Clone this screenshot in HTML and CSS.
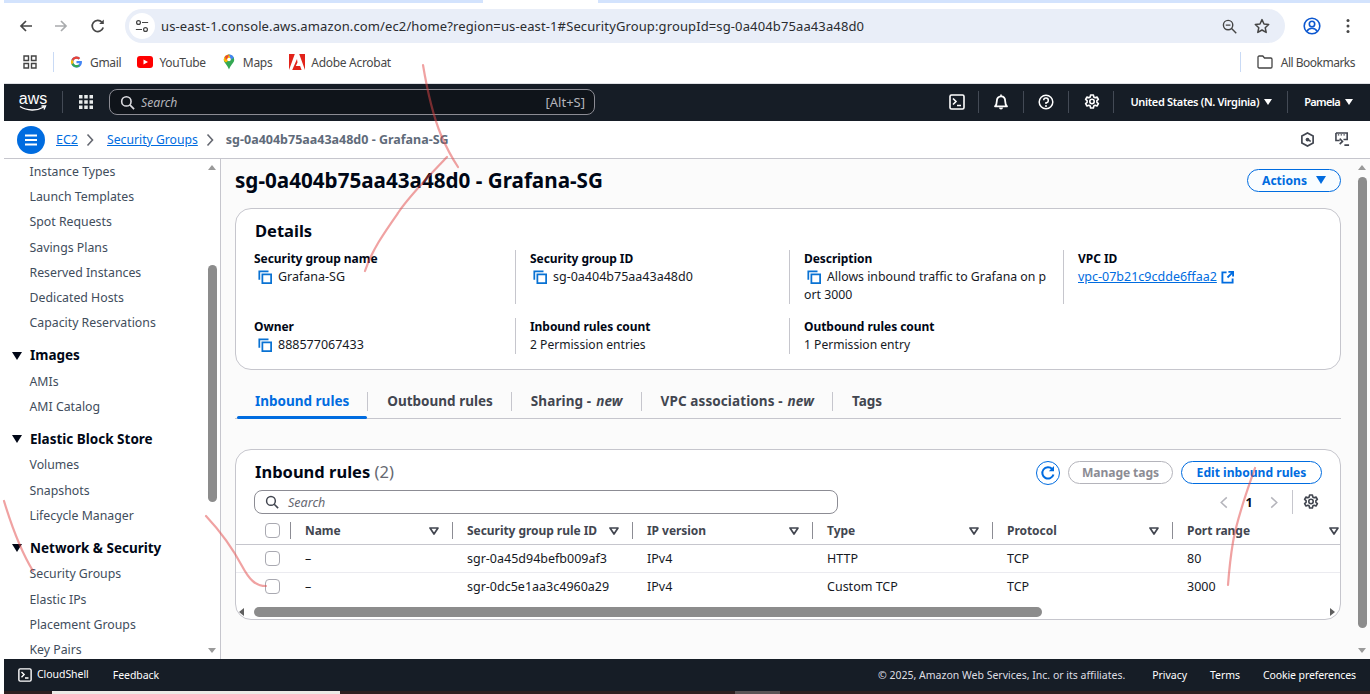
FILE: index.html
```html
<!DOCTYPE html>
<html lang="en">
<head>
<meta charset="utf-8">
<title>sg-0a404b75aa43a48d0 - Grafana-SG</title>
<link rel="stylesheet" href="styles.css">
</head>
<body>
<svg class="defs" width="0" height="0" aria-hidden="true">
  <symbol id="copy" viewBox="0 0 16 16"><path d="M1.500 11V1.500H12" fill="none" stroke="currentColor" stroke-width="2"/><rect x="5" y="5" width="10" height="10" fill="none" stroke="currentColor" stroke-width="2"/></symbol>
  <symbol id="filter" viewBox="0 0 10 8"><path d="M1 1h8L5 7z" fill="none" stroke="currentColor" stroke-width="1.700" stroke-linejoin="round"/></symbol>
  <symbol id="gear" viewBox="0 0 16 16"><path d="M6.600 1h2.800l.4 2 1.300.7 1.900-.7 1.400 2.400-1.500 1.300v1.600l1.500 1.300-1.400 2.400-1.900-.7-1.300.7-.4 2H6.600l-.4-2-1.300-.7-1.900.7L1.600 9.600l1.500-1.300V6.700L1.600 5.400 3 3l1.900.7 1.300-.7z" fill="none" stroke="currentColor" stroke-width="1.600" stroke-linejoin="round"/><circle cx="8" cy="7.500" r="2.200" fill="none" stroke="currentColor" stroke-width="1.600"/></symbol>
  <symbol id="shell" viewBox="0 0 16 16"><rect x="1" y="1" width="14" height="14" rx="1.500" fill="none" stroke="currentColor" stroke-width="1.600"/><path d="M4 4.500 7 7.500 4 10.500M8 11.500h4" fill="none" stroke="currentColor" stroke-width="1.600"/></symbol>
  <symbol id="search" viewBox="0 0 16 16"><circle cx="6.800" cy="6.800" r="5" fill="none" stroke="currentColor" stroke-width="1.700"/><path d="m10.500 10.500 4.500 4.500" stroke="currentColor" stroke-width="1.800"/></symbol>
</svg>

<div class="tabstrip"><span class="tabstrip-a"></span><span class="tabstrip-gap"></span><span class="tabstrip-b"></span></div>

<div class="toolbar">
  <svg class="tb-ic tb-back" viewBox="0 0 16 16"><path d="M14 8H3M8 3 3 8l5 5" fill="none" stroke="#474747" stroke-width="1.700"/></svg>
  <svg class="tb-ic tb-fwd" viewBox="0 0 16 16"><path d="M2 8h11M8 3l5 5-5 5" fill="none" stroke="#a9abad" stroke-width="1.700"/></svg>
  <svg class="tb-ic tb-reload" viewBox="0 0 16 16"><path d="M13.200 9.500A5.600 5.600 0 1 1 12 4.200" fill="none" stroke="#474747" stroke-width="1.700"/><path d="M13.800 1.500v4.600H9.200z" fill="#474747"/></svg>
  <div class="omnibox">
    <span class="tune"><svg viewBox="0 0 16 16" width="14" height="14"><circle cx="4" cy="4" r="2.200" fill="none" stroke="#444" stroke-width="1.400"/><path d="M8 4h7M1 12h7" stroke="#444" stroke-width="1.400"/><circle cx="12" cy="12" r="2.200" fill="none" stroke="#444" stroke-width="1.400"/></svg></span>
    <span class="url">us-east-1.console.aws.amazon.com/ec2/home?region=us-east-1#SecurityGroup:groupId=sg-0a404b75aa43a48d0</span>
    <svg class="omni-ic zoom-ic" viewBox="0 0 16 16"><circle cx="6.500" cy="6.500" r="5" fill="none" stroke="#444" stroke-width="1.500"/><path d="m10.200 10.200 5 5M4 6.500h5" stroke="#444" stroke-width="1.500"/></svg>
    <svg class="omni-ic star-ic" viewBox="0 0 16 16"><path d="m8 1.600 2 4.400 4.700.5-3.500 3.200 1 4.700L8 12l-4.200 2.400 1-4.700L1.300 6.500 6 6z" fill="none" stroke="#444" stroke-width="1.500" stroke-linejoin="round"/></svg>
  </div>
  <svg class="tb-ic tb-profile" viewBox="0 0 18 18"><circle cx="9" cy="9" r="7.800" fill="none" stroke="#0b57d0" stroke-width="1.600"/><circle cx="9" cy="7" r="2.700" fill="none" stroke="#0b57d0" stroke-width="1.600"/><path d="M3.800 14.500c1.200-2.400 3-3.300 5.200-3.300s4 .9 5.200 3.300" fill="none" stroke="#0b57d0" stroke-width="1.600"/></svg>
  <svg class="tb-ic tb-menu" viewBox="0 0 4 16"><circle cx="2" cy="2.500" r="1.500" fill="#474747"/><circle cx="2" cy="8" r="1.500" fill="#474747"/><circle cx="2" cy="13.500" r="1.500" fill="#474747"/></svg>
</div>

<div class="bookmarks">
  <svg class="bm-apps" viewBox="0 0 14 14"><path d="M1 1h4.500v4.500H1zM8.500 1H13v4.500H8.500zM1 8.500h4.500V13H1zM8.500 8.500H13V13H8.500z" fill="none" stroke="#444" stroke-width="1.400"/></svg>
  <span class="bm-sep"></span>
  <span class="bm bm-gmail"><svg viewBox="0 0 16 16" width="13" height="14"><path d="M14.500 6.700H8v2.700h3.700c-.4 1.600-1.800 2.500-3.700 2.500a3.900 3.900 0 0 1 0-7.800c1 0 1.800.3 2.500.9l2-2A6.700 6.700 0 0 0 8 1.200a6.800 6.800 0 1 0 0 13.600c3.900 0 6.700-2.700 6.700-6.800 0-.5 0-.9-.2-1.300z" fill="#4285f4"/><path d="M2 4.700 4.300 6.400A3.900 3.900 0 0 1 8 4.100c1 0 1.800.3 2.500.9l2-2A6.700 6.700 0 0 0 2 4.700z" fill="#ea4335"/><path d="M1.900 11.200A6.800 6.800 0 0 0 12.300 13l-2.200-1.800a4 4 0 0 1-5.900-2z" fill="#34a853"/><path d="M1.900 4.800a6.800 6.800 0 0 0 0 6.400l2.300-1.900a4 4 0 0 1 0-2.600z" fill="#fbbc05"/></svg>Gmail</span>
  <span class="bm bm-yt"><svg viewBox="0 0 16 12" width="16" height="12"><rect width="16" height="12" rx="3" fill="#f00"/><path d="m6.500 3.500 4.500 2.500-4.500 2.500z" fill="#fff"/></svg>YouTube</span>
  <span class="bm bm-maps"><svg viewBox="0 0 12 16" width="12" height="16"><path d="M6 .5A5.200 5.200 0 0 1 11.200 5.700c0 3.300-3.700 5-5.200 9.800C4.500 10.700.8 9 .8 5.700A5.200 5.200 0 0 1 6 .5z" fill="#34a853"/><path d="M2 2.200A5.200 5.200 0 0 1 6 .5l3 3.200-6 4.800C1.500 7.500.8 6.800.8 5.700 .8 4.300 1.300 3.100 2 2.200z" fill="#fbbc05"/><path d="M6 .5a5.200 5.200 0 0 1 4.800 3.200L8 5.700z" fill="#4285f4"/><path d="M2 2.200 6 .5 4.500 4.300 2.800 6z" fill="#ea4335"/><circle cx="6" cy="5.500" r="1.800" fill="#fff"/></svg>Maps</span>
  <span class="bm bm-acro"><svg viewBox="0 0 16 16" width="16" height="16"><rect width="16" height="16" fill="#e2231a"/><path d="M5.800 0h4.400L16 16h-3.400l-1.500-4H6.800l1.700-3.600L8 5 3.200 16H0z" fill="#fff"/></svg>Adobe Acrobat</span>
  <span class="bm-spacer"></span>
  <span class="bm-sep bm-sep-r"></span>
  <span class="bm bm-all"><svg viewBox="0 0 16 14" width="16" height="14"><path d="M1 2.200C1 1.500 1.500 1 2.200 1h3.600l1.700 2h6.300c.7 0 1.200.5 1.200 1.200v7.600c0 .7-.5 1.200-1.200 1.200H2.200C1.500 13 1 12.500 1 11.800z" fill="none" stroke="#444" stroke-width="1.300"/></svg>All Bookmarks</span>
</div>

<div class="app">
  <header class="topnav">
    <span class="aws-logo"><span class="aws-word">aws</span><svg viewBox="0 0 28 7" width="28" height="7"><path d="M1 1.500c7 4.500 17 4.500 24 .5M22.500 1h4l-1.500 3.500" fill="none" stroke="#fff" stroke-width="1.400"/></svg></span>
    <span class="nav-div nav-div-logo"></span>
    <svg class="nav-grid" viewBox="0 0 14 14"><path d="M0 0h3.500v3.500H0zM5.250 0h3.500v3.500h-3.500zM10.500 0H14v3.500h-3.500zM0 5.250h3.500v3.500H0zM5.250 5.250h3.500v3.500h-3.500zM10.500 5.250H14v3.500h-3.500zM0 10.500h3.500V14H0zM5.250 10.500h3.500V14h-3.500zM10.500 10.500H14V14h-3.500z" fill="#eaeded"/></svg>
    <div class="nav-search">
      <svg class="nav-search-ic"><use href="#search"/></svg>
      <span class="nav-search-text">Search</span>
      <span class="nav-search-key">[Alt+S]</span>
    </div>
    <span class="nav-spacer"></span>
    <svg class="nav-ic nav-shell"><use href="#shell"/></svg>
    <span class="nav-div"></span>
    <svg class="nav-ic nav-bell" viewBox="0 0 16 16"><path d="M2 12.300c1.300-1.200 1.800-2.500 1.800-5C3.800 4.300 5.500 2.300 8 2.300s4.200 2 4.200 5c0 2.500.5 3.800 1.800 5z" fill="none" stroke="#fff" stroke-width="1.800" stroke-linejoin="round"/><path d="M6 13.500a2 2 0 0 0 4 0z" fill="#fff"/><path d="M8 .5v2" stroke="#fff" stroke-width="1.600"/></svg>
    <span class="nav-div"></span>
    <svg class="nav-ic nav-help" viewBox="0 0 16 16"><circle cx="8" cy="8" r="6.800" fill="none" stroke="#fff" stroke-width="1.500"/><path d="M5.700 6.200A2.300 2.300 0 1 1 8 8.700v1.400" fill="none" stroke="#fff" stroke-width="1.500"/><circle cx="8" cy="12" r="1" fill="#fff"/></svg>
    <span class="nav-div"></span>
    <svg class="nav-ic nav-gear"><use href="#gear"/></svg>
    <span class="nav-div"></span>
    <span class="nav-menu nav-region">United States (N. Virginia)<i class="caret"></i></span>
    <span class="nav-div"></span>
    <span class="nav-menu nav-user">Pamela<i class="caret"></i></span>
  </header>

  <div class="crumbs">
    <span class="burger"><svg viewBox="0 0 14 12" width="14" height="12"><path d="M1 1.500h12M1 6h12M1 10.500h12" stroke="#fff" stroke-width="2"/></svg></span>
    <a class="crumb crumb-ec2">EC2</a>
    <svg class="crumb-chev" viewBox="0 0 8 14"><path d="m1.500 1.500 5 5.500-5 5.500" fill="none" stroke="#656871" stroke-width="1.600"/></svg>
    <a class="crumb">Security Groups</a>
    <svg class="crumb-chev" viewBox="0 0 8 14"><path d="m1.500 1.500 5 5.500-5 5.500" fill="none" stroke="#656871" stroke-width="1.600"/></svg>
    <span class="crumb-now">sg-0a404b75aa43a48d0 - Grafana-SG</span>
    <span class="nav-spacer"></span>
    <svg class="crumb-ic crumb-ic-a" viewBox="0 0 16 16"><path d="M8 1 14 4.200v7.600L8 15l-6-3.200V4.200z" fill="none" stroke="#424650" stroke-width="1.800"/><circle cx="8" cy="8" r="2" fill="#424650"/><path d="m8 8 3.500 2" stroke="#424650" stroke-width="1.600"/></svg>
    <svg class="crumb-ic crumb-ic-b" viewBox="0 0 16 16"><path d="M1 1h12v7H9M5 9H1V1" fill="none" stroke="#424650" stroke-width="1.700"/><path d="M3 3h1.500M6 3h1.500M9 3h1.500" stroke="#424650" stroke-width="1.400"/><path d="m5 7 3 3-3 3M10 14h5" fill="none" stroke="#424650" stroke-width="1.700"/></svg>
  </div>

  <div class="workspace">
    <nav class="sidenav">
      <div class="side-list">
        <a class="side-item">Instance Types</a>
        <a class="side-item">Launch Templates</a>
        <a class="side-item">Spot Requests</a>
        <a class="side-item">Savings Plans</a>
        <a class="side-item">Reserved Instances</a>
        <a class="side-item">Dedicated Hosts</a>
        <a class="side-item">Capacity Reservations</a>
        <div class="side-head"><i class="side-tri"></i>Images</div>
        <a class="side-item">AMIs</a>
        <a class="side-item">AMI Catalog</a>
        <div class="side-head"><i class="side-tri"></i>Elastic Block Store</div>
        <a class="side-item">Volumes</a>
        <a class="side-item">Snapshots</a>
        <a class="side-item">Lifecycle Manager</a>
        <div class="side-head"><i class="side-tri"></i>Network &amp; Security</div>
        <a class="side-item">Security Groups</a>
        <a class="side-item">Elastic IPs</a>
        <a class="side-item">Placement Groups</a>
        <a class="side-item">Key Pairs</a>
      </div>
      <div class="vscroll side-scroll"><i class="arrow-up"></i><span class="vthumb"></span><i class="arrow-down"></i></div>
    </nav>

    <main class="main">
      <div class="content">
        <div class="title-row">
          <h1 class="page-title">sg-0a404b75aa43a48d0 - Grafana-SG</h1>
          <button class="btn btn-actions">Actions<i class="caret caret-blue"></i></button>
        </div>

        <section class="card details">
          <h2 class="card-title">Details</h2>
          <div class="kv-row">
            <div class="kv"><div class="k">Security group name</div><div class="v"><svg class="copy"><use href="#copy"/></svg>Grafana-SG</div></div>
            <div class="kv kv-line"><div class="k">Security group ID</div><div class="v v-id"><svg class="copy"><use href="#copy"/></svg>sg-0a404b75aa43a48d0</div></div>
            <div class="kv kv-line"><div class="k">Description</div><div class="v v-wrap"><svg class="copy"><use href="#copy"/></svg>Allows inbound traffic to Grafana on p<br>ort 3000</div></div>
            <div class="kv kv-line"><div class="k">VPC ID</div><div class="v v-link"><a class="link">vpc-07b21c9cdde6ffaa2</a><svg class="ext" viewBox="0 0 14 14"><path d="M6 1.500H1.500v11h11V8" fill="none" stroke="currentColor" stroke-width="2"/><path d="M7 7l5-5M8 1h5v5" fill="none" stroke="currentColor" stroke-width="2"/></svg></div></div>
          </div>
          <div class="kv-row kv-row-2">
            <div class="kv"><div class="k">Owner</div><div class="v"><svg class="copy"><use href="#copy"/></svg>888577067433</div></div>
            <div class="kv kv-line"><div class="k">Inbound rules count</div><div class="v v-plain">2 Permission entries</div></div>
            <div class="kv kv-line"><div class="k">Outbound rules count</div><div class="v v-plain">1 Permission entry</div></div>
          </div>
        </section>

        <div class="tabs">
          <span class="tab tab-on">Inbound rules</span>
          <span class="tab">Outbound rules</span>
          <span class="tab tab-new">Sharing - <em>new</em></span>
          <span class="tab tab-new">VPC associations - <em>new</em></span>
          <span class="tab tab-last">Tags</span>
        </div>

        <section class="card rules">
          <div class="rules-head">
            <h2 class="card-title card-title-flat">Inbound rules <span class="count">(2)</span></h2>
            <div class="rules-actions">
              <button class="btn-refresh"><svg viewBox="0 0 16 16" width="16" height="16"><path d="M13.500 9.500A5.700 5.700 0 1 1 12.200 4" fill="none" stroke="#006ce0" stroke-width="2"/><path d="M14 1v5.200H8.800z" fill="#006ce0"/></svg></button>
              <button class="btn btn-muted">Manage tags</button>
              <button class="btn btn-edit">Edit inbound rules</button>
            </div>
          </div>
          <div class="rules-tools">
            <div class="filter-box"><svg class="filter-ic"><use href="#search"/></svg><span class="filter-text">Search</span></div>
            <div class="pager">
              <svg class="pg" viewBox="0 0 10 14"><path d="M8 1.500 2 7l6 5.500" fill="none" stroke="#b4b4bb" stroke-width="1.600"/></svg>
              <span class="pg pg-num">1</span>
              <svg class="pg" viewBox="0 0 10 14"><path d="m2 1.500 6 5.500-6 5.500" fill="none" stroke="#b4b4bb" stroke-width="1.600"/></svg>
              <span class="pg-div"></span>
              <svg class="pg-gear"><use href="#gear"/></svg>
            </div>
          </div>
          <div class="tbl">
            <div class="tr tr-head">
              <div class="cell-check"><span class="check"></span></div>
              <div class="th">Name<svg class="fl"><use href="#filter"/></svg></div>
              <div class="th">Security group rule ID<svg class="fl"><use href="#filter"/></svg></div>
              <div class="th">IP version<svg class="fl"><use href="#filter"/></svg></div>
              <div class="th">Type<svg class="fl"><use href="#filter"/></svg></div>
              <div class="th">Protocol<svg class="fl"><use href="#filter"/></svg></div>
              <div class="th th-last">Port range<svg class="fl"><use href="#filter"/></svg></div>
            </div>
            <div class="tr tr-row">
              <div class="cell-check"><span class="check"></span></div>
              <div class="td">–</div><div class="td">sgr-0a45d94befb009af3</div><div class="td">IPv4</div><div class="td">HTTP</div><div class="td">TCP</div><div class="td">80</div>
            </div>
            <div class="tr tr-row tr-end">
              <div class="cell-check"><span class="check"></span></div>
              <div class="td">–</div><div class="td">sgr-0dc5e1aa3c4960a29</div><div class="td">IPv4</div><div class="td">Custom TCP</div><div class="td">TCP</div><div class="td">3000</div>
            </div>
          </div>
          <div class="hscroll"><i class="arrow-left"></i><span class="hthumb"></span><i class="arrow-right"></i></div>
        </section>
      </div>
      <div class="vscroll main-scroll"><i class="arrow-up"></i><span class="vthumb"></span><i class="arrow-down"></i></div>
    </main>
  </div>

  <footer class="footer">
    <svg class="foot-shell"><use href="#shell"/></svg>
    <span class="foot-cs">CloudShell</span>
    <span class="foot-fb">Feedback</span>
    <span class="nav-spacer"></span>
    <span class="foot-copy">© 2025, Amazon Web Services, Inc. or its affiliates.</span>
    <span class="foot-link">Privacy</span>
    <span class="foot-link">Terms</span>
    <span class="foot-link foot-cookie">Cookie preferences</span>
  </footer>
  <div class="desk"><span class="desk-a"></span><span class="desk-b"></span><span class="desk-c"></span><span class="desk-d"></span></div>
</div>

<svg class="scribbles" viewBox="0 0 1370 694" aria-hidden="true">
  <path d="M423 65C428 95 434 118 441 135C447 149 452 158 458 167"/>
  <path d="M447 157C431 174 410 195 398 213C384 233 372 250 365 271"/>
  <path d="M4 501C11 524 22 553 33 571"/>
  <path d="M206 516C220 531 233 549 242 566C249 579 255 586 266 586"/>
  <path d="M1255 468C1246 494 1237 518 1233 542C1230 560 1229 572 1228 585"/>
</svg>
</body>
</html>
```

FILE: styles.css
```css
* { box-sizing: border-box; }
html, body { margin: 0; padding: 0; }
body {
  width: 1370px;
  height: 694px;
  overflow: hidden;
  position: relative;
  background: #fff;
  padding-left: 4px;
  font-family: "Noto Sans", "Open Sans", sans-serif;
  font-size: 12.5px;
  color: #000716;
}
.defs { position: absolute; }
svg { display: block; flex: none; }
i { display: block; font-style: normal; }
a { color: inherit; }
h1, h2 { margin: 0; }
button { font: inherit; margin: 0; }

/* browser chrome */
.tabstrip { display: flex; height: 3px; background: #d3e3fd; }
.tabstrip-a { width: 479px; }
.tabstrip-gap { width: 115px; background: #fff; }
.tabstrip-b { flex: 1; }

.toolbar { display: flex; align-items: center; height: 40px; padding-top: 6px; }
.tb-ic { width: 16px; height: 16px; }
.tb-back { margin-left: 14px; }
.tb-fwd { margin-left: 19px; }
.tb-reload { margin-left: 21px; }
.omnibox {
  display: flex; align-items: center;
  width: 1160px; height: 34px; margin-left: 19px;
  padding: 0 15px 0 4px;
  background: #e9eef8; border-radius: 17px;
}
.tune { width: 26px; height: 26px; border-radius: 50%; background: #fff; display: flex; align-items: center; justify-content: center; }
.url { margin-left: 6px; font-size: 13px; color: #2a2c30; white-space: nowrap; flex: 1; letter-spacing: 0.12px; }
.omni-ic { width: 15px; height: 15px; }
.star-ic { margin-left: 17px; width: 16px; height: 16px; }
.tb-profile { width: 18px; height: 18px; margin-left: 18px; }
.tb-menu { width: 4px; height: 16px; margin-left: 25px; }

.bookmarks { display: flex; align-items: center; height: 41px; border-bottom: 1px solid #dfe1e5; color: #474747; font-size: 12px; padding-bottom: 2px; }
.bm-apps { width: 14px; height: 14px; margin-left: 19px; }
.bm-sep { width: 1px; height: 20px; background: #c9daf5; margin-left: 16px; }
.bm { display: flex; align-items: center; white-space: nowrap; letter-spacing: -0.3px; }
.bm-gmail { margin-left: 16px; gap: 7px; }
.bm-yt { margin-left: 16px; gap: 6px; }
.bm-maps { margin-left: 17px; gap: 8px; }
.bm-acro { margin-left: 17px; gap: 6px; }
.bm-spacer { flex: 1; }
.bm-sep-r { margin: 0; }
.bm-all { margin-left: 16px; margin-right: 15px; gap: 8px; letter-spacing: -0.5px; }

/* console */
.app { display: flex; flex-direction: column; height: 610px; }
.topnav { display: flex; align-items: center; height: 37px; padding-bottom: 1px; background: #161d26; color: #fff; flex: none; }
.aws-logo { width: 28px; margin-left: 15px; display: flex; flex-direction: column; align-items: center; }
.aws-word { font-family: "Liberation Sans", sans-serif; font-size: 16px; font-weight: 400; line-height: 13px; height: 13px; }
.nav-div { width: 1px; height: 22px; background: #434a55; }
.nav-div-logo { margin-left: 15px; }
.nav-grid { width: 14px; height: 14px; margin-left: 16px; }
.nav-search {
  display: flex; align-items: center;
  width: 486px; height: 26px; margin-left: 16px; padding: 0 9px 0 10px;
  background: #0f141a; border: 1px solid #8c8c94; border-radius: 8px;
}
.nav-search-ic { width: 15px; height: 15px; color: #dedee3; }
.nav-search-text { margin-left: 6px; font-style: italic; font-size: 12.2px; color: #b4b4bb; flex: 1; }
.nav-search-key { font-size: 13px; color: #b4b4bb; }
.nav-spacer { flex: 1; }
.nav-ic { width: 16px; height: 16px; color: #fff; margin: 0 14px; }
.nav-shell { margin-right: 13px; }
.nav-gear { margin: 0 13px 0 15px; }
.nav-menu { display: flex; align-items: center; font-size: 11px; font-weight: 600; white-space: nowrap; letter-spacing: -0.35px; color: #fff; padding-bottom: 1px; }
.nav-region { padding-left: 16px; padding-right: 15px; }
.nav-user { padding-left: 16px; padding-right: 17px; letter-spacing: -0.65px; }
.caret { width: 0; height: 0; border: 4px solid transparent; border-top: 6px solid currentColor; border-bottom: 0; margin-left: 5px; }

.crumbs { display: flex; align-items: center; height: 38px; background: #fff; border-bottom: 1px solid #c6c6cd; flex: none; }
.burger { width: 28px; height: 28px; border-radius: 50%; background: #006ce0; margin-left: 13px; display: flex; align-items: center; justify-content: center; }
.crumb { color: #006ce0; text-decoration: underline; font-size: 12.2px; white-space: nowrap; }
.crumb-ec2 { margin-left: 11px; font-size: 12.5px; }
.crumb-chev { width: 8px; height: 14px; margin: 0 13px 0 8px; }
.crumb-now { color: #5f6b7a; font-weight: 700; font-size: 12.5px; white-space: nowrap; margin-left: -1px; }
.crumb-ic { width: 15px; height: 15px; }
.crumb-ic-b { margin-left: 20px; margin-right: 20px; }

.workspace { display: flex; flex: 1; min-height: 0; background: #fbfbfb; }
.sidenav { display: flex; width: 217px; height: 100%; border-right: 1px solid #c6c6cd; background: #fff; overflow: hidden; }
.side-list { width: 203px; overflow: hidden; padding-left: 25.5px; }
.side-item { display: block; height: 25.2px; line-height: 25.2px; font-size: 12.3px; color: #414d5c; white-space: nowrap; }
.side-head { display: flex; align-items: center; height: 28px; padding-top: 1px; margin-top: 5.4px; margin-left: -17.5px; font-size: 13.5px; font-weight: 700; color: #000716; white-space: nowrap; }
.side-tri { width: 0; height: 0; border: 5px solid transparent; border-top: 8px solid #000716; border-bottom: 0; margin-right: 8px; margin-top: 1px; }

.vscroll { display: flex; flex-direction: column; align-items: center; width: 10px; position: relative; }
.side-scroll { height: 100%; }
.vthumb { width: 9px; background: #8c8c8c; border-radius: 5px; }
.side-scroll .vthumb { height: 237px; margin-top: 95px; }
.main-scroll .vthumb { height: 451px; margin-top: 7px; }
.arrow-up { width: 0; height: 0; border: 4.5px solid transparent; border-bottom: 5px solid #9a9a9a; border-top: 0; margin-top: 6px; }
.arrow-down { width: 0; height: 0; border: 4.5px solid transparent; border-top: 5px solid #9a9a9a; border-bottom: 0; position: absolute; bottom: 6px; }

.main { display: flex; flex: 1; min-width: 0; }
.content { width: 1136px; padding: 9px 16px 0 14px; }
.main-scroll { height: 100%; }

.title-row { display: flex; align-items: center; justify-content: space-between; height: 24px; }
.page-title { font-size: 20.65px; font-weight: 700; line-height: 24px; color: #000716; white-space: nowrap; }
.btn { height: 23px; padding: 0 14px; border-radius: 12px; background: #fff; font-size: 12.1px; font-weight: 700; white-space: nowrap; display: flex; align-items: center; justify-content: center; }
.btn-actions { width: 94px; color: #006ce0; border: 1px solid #006ce0; background: #f9fdff; }
.caret-blue { border-width: 5px; border-top-width: 8px; border-bottom-width: 0; margin-left: 9px; }

.card { border: 1px solid #c6c6cd; border-radius: 16px; background: #fff; }
.details { height: 162px; margin-top: 16px; padding: 11px 19px 0 18px; }
.card-title { font-size: 16.5px; font-weight: 700; line-height: 22px; color: #000716; white-space: nowrap; margin-left: 1px; }
.kv-row { display: grid; grid-template-columns: 261px 274px 274px 1fr; margin-top: 8px; height: 54px; }
.kv-row-2 { margin-top: 14px; height: 36px; }
.kv-line { border-left: 1px solid #c6c6cd; padding-left: 14px; }
.k { font-weight: 700; font-size: 12px; letter-spacing: -0.05px; line-height: 18px; color: #000716; white-space: nowrap; }
.v { display: flex; align-items: center; line-height: 18px; font-size: 12.5px; color: #16191f; white-space: nowrap; padding-left: 4px; height: 18px; }
.v-id { padding-left: 3px; }
.v-wrap { display: block; height: 36px; padding-left: 0; font-size: 12.3px; }
.v-wrap .copy { display: inline-block; vertical-align: -3px; margin-left: 3px; }
.v-plain { padding-left: 0; font-size: 12.1px; }
.v-link { padding-left: 0; }
.copy { width: 14px; height: 14px; color: #0972d3; margin-right: 6px; }
.link { color: #006ce0; text-decoration: underline; }
.ext { width: 13px; height: 13px; color: #006ce0; margin-left: 4px; }

.tabs { display: flex; height: 27px; margin-top: 22px; border-bottom: 1px solid #c6c6cd; }
.tab { display: flex; align-items: flex-start; height: 26px; padding: 0 18px 0 20px; font-size: 13.5px; font-weight: 700; line-height: 18px; color: #424650; white-space: nowrap; position: relative; }
.tab + .tab::before { content: ""; position: absolute; left: 0; top: 0; width: 1px; height: 19px; background: #c6c6cd; }
.tab-new { letter-spacing: 0.1px; }
.tab em { font-style: italic; margin-left: 5px; color: #424650; }
.tab-on { color: #006ce0; padding-left: 18px; margin-left: 2px; }
.tab-on::after { content: ""; position: absolute; left: 0; right: 0; bottom: -1px; height: 3px; background: #006ce0; border-radius: 2px; }

.rules { height: 171px; margin-top: 30px; }
.rules-head { display: flex; align-items: center; justify-content: space-between; height: 23px; margin-top: 11px; padding: 0 18px; }
.card-title-flat { height: 23px; line-height: 22px; }
.count { font-weight: 400; color: #656871; }
.rules-actions { display: flex; align-items: center; }
.btn-refresh { width: 24px; height: 24px; padding: 0; border: 1.5px solid #006ce0; border-radius: 50%; background: #fff; display: flex; align-items: center; justify-content: center; }
.btn-muted { width: 105px; margin-left: 8px; color: #8c8c94; border: 1px solid #b4b4bb; letter-spacing: -0.1px; }
.btn-edit { width: 141px; margin-left: 8px; color: #006ce0; border: 1px solid #006ce0; }
.rules-tools { display: flex; align-items: center; justify-content: space-between; height: 24px; margin-top: 6px; padding: 0 21px 0 18px; }
.filter-box { display: flex; align-items: center; width: 584px; height: 24px; padding-left: 10px; border: 1px solid #8c8c94; border-radius: 8px; background: #fff; }
.filter-ic { width: 14px; height: 14px; color: #424650; }
.filter-text { margin-left: 9px; font-style: italic; font-size: 12.5px; color: #656871; }
.pager { display: flex; align-items: center; }
.pg { width: 10px; height: 13px; }
.pg-num { width: 10px; margin: 0 15px; font-weight: 700; font-size: 12.5px; text-align: center; color: #000716; line-height: 13px; }
.pg-div { width: 1px; height: 24px; background: #c6c6cd; margin-left: 13px; }
.pg-gear { width: 16px; height: 16px; color: #424650; margin-left: 10px; }

.tbl { margin-top: 3px; }
.tr { display: grid; grid-template-columns: 54px 162px repeat(4, 180px) 168px; }
.tr-head { height: 28px; border-bottom: 1px solid #c6c6cd; align-items: center; }
.tr-row { height: 28px; padding-bottom: 1px; border-bottom: 1px solid #ebebf0; align-items: center; background: #fff; }
.tr-end { border-bottom: 0; }
.cell-check { padding-left: 29px; display: flex; align-items: center; }
.check { width: 15px; height: 15px; border: 1px solid #a9a9b1; border-radius: 4px; background: #fff; }
.th { display: flex; align-items: center; justify-content: space-between; height: 17px; padding: 0 13px 0 14px; border-left: 1px solid #8c8c94; font-size: 12px; letter-spacing: -0.05px; font-weight: 700; color: #424650; white-space: nowrap; }
.th-last { padding-right: 1px; }
.fl { width: 10px; height: 8px; color: #424650; }
.td { padding-left: 15px; font-size: 12.5px; color: #16191f; white-space: nowrap; }

.hscroll { display: flex; align-items: center; height: 19px; position: relative; padding-left: 18px; }
.hthumb { width: 788px; height: 10px; background: #8c8c8c; border-radius: 5px; margin-top: 3px; }
.arrow-left { width: 0; height: 0; border: 4.5px solid transparent; border-right: 5px solid #5f5f5f; border-left: 0; position: absolute; left: 3px; top: 7px; }
.arrow-right { width: 0; height: 0; border: 4.5px solid transparent; border-left: 5px solid #5f5f5f; border-right: 0; position: absolute; right: 5px; top: 7px; }

.footer { display: flex; align-items: center; height: 32px; background: #161d26; color: #fff; font-size: 10.5px; white-space: nowrap; flex: none; }
.foot-shell { width: 14px; height: 14px; margin-left: 14px; color: #fff; }
.foot-cs { margin-left: 5px; margin-top: -2px; letter-spacing: -0.05px; }
.foot-fb { margin-left: 24px; letter-spacing: -0.05px; }
.foot-copy { color: #dedee3; margin-right: 27px; }
.foot-link { margin-right: 23px; letter-spacing: -0.05px; }
.foot-cookie { margin-right: 14px; letter-spacing: -0.1px; }

.desk { display: flex; height: 3px; background: #2d1f20; flex: none; }
.desk-a { width: 48px; }
.desk-b { width: 288px; background: #eceae6; }
.desk-c { width: 395px; }
.desk-d { width: 45px; background: #5a5356; }

.scribbles { position: absolute; left: 0; top: 0; width: 1370px; height: 694px; pointer-events: none; }
.scribbles path { fill: none; stroke: rgba(225, 70, 70, 0.5); stroke-width: 2.2; stroke-linecap: round; }
```
